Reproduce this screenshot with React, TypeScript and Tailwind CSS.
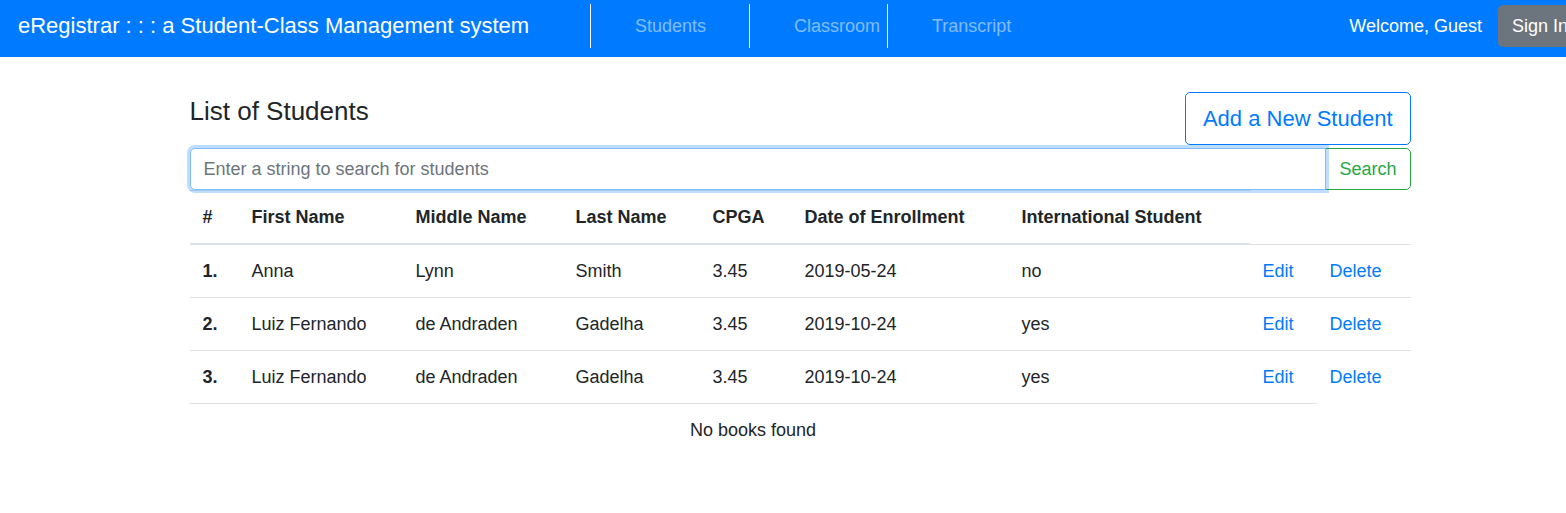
type Student = {
  first: string;
  middle: string;
  last: string;
  cgpa: string;
  enrolled: string;
  international: string;
};

const students: Student[] = [
  { first: 'Anna', middle: 'Lynn', last: 'Smith', cgpa: '3.45', enrolled: '2019-05-24', international: 'no' },
  { first: 'Luiz Fernando', middle: 'de Andraden', last: 'Gadelha', cgpa: '3.45', enrolled: '2019-10-24', international: 'yes' },
  { first: 'Luiz Fernando', middle: 'de Andraden', last: 'Gadelha', cgpa: '3.45', enrolled: '2019-10-24', international: 'yes' },
];

const headings = ['#', 'First Name', 'Middle Name', 'Last Name', 'CPGA', 'Date of Enrollment', 'International Student'];

const cell = 'border-t border-[#dee2e6] p-[13px] text-left align-top';

function NavBar() {
  return (
    <header className="flex h-[57px] items-center bg-[#007bff] px-[18px] pb-[5px] text-white">
      <a href="#home" className="w-[572px] shrink-0 text-[22px] leading-8 whitespace-nowrap">
        eRegistrar : : : a Student-Class Management system
      </a>
      <nav className="flex h-11 items-center text-white/50">
        <a href="#students" className="flex h-11 w-[159px] items-center border-l border-white pl-11">Students</a>
        <a href="#classroom" className="flex h-11 w-[138px] items-center border-l border-white pl-11">Classroom</a>
        <a href="#transcript" className="flex h-11 items-center border-l border-white pl-11">Transcript</a>
      </nav>
      <div className="ml-auto flex items-center gap-4 whitespace-nowrap">
        <span>Welcome, Guest</span>
        <button type="button" className="h-[42px] rounded-[5px] bg-[#6c757d] px-[14px]">Sign In</button>
      </div>
    </header>
  );
}

function SearchForm() {
  return (
    <form className="flex" onSubmit={(e) => e.preventDefault()}>
      <input
        type="text"
        aria-label="Search students"
        placeholder="Enter a string to search for students"
        className="relative z-10 h-[42px] min-w-0 flex-1 rounded-l-[5px] border border-[#80bdff] bg-white px-[13px] shadow-[0_0_0_3px_rgba(0,123,255,0.25)] outline-none placeholder:text-[#6c757d]"
      />
      <button type="submit" className="-ml-px h-[42px] rounded-r-[5px] border border-[#28a745] px-[13px] text-[#28a745]">
        Search
      </button>
    </form>
  );
}

function StudentTable() {
  return (
    <table className="w-full table-fixed border-collapse">
      <colgroup>
        <col className="w-[49px]" />
        <col className="w-[164px]" />
        <col className="w-[160px]" />
        <col className="w-[137px]" />
        <col className="w-[92px]" />
        <col className="w-[217px]" />
        <col className="w-[241px]" />
        <col className="w-[67px]" />
        <col className="w-[94px]" />
      </colgroup>
      <thead>
        <tr>
          {headings.map((h) => (
            <th key={h} scope="col" className="border-t border-b-2 border-[#dee2e6] p-[13px] text-left font-bold">
              {h}
            </th>
          ))}
        </tr>
      </thead>
      <tbody>
        {students.map((s, i) => (
          <tr key={i}>
            <th scope="row" className={cell}>{i + 1}.</th>
            <td className={cell}>{s.first}</td>
            <td className={cell}>{s.middle}</td>
            <td className={cell}>{s.last}</td>
            <td className={cell}>{s.cgpa}</td>
            <td className={cell}>{s.enrolled}</td>
            <td className={cell}>{s.international}</td>
            <td className={cell}><a href="#edit" className="text-[#007bff]">Edit</a></td>
            <td className={cell}><a href="#delete" className="text-[#007bff]">Delete</a></td>
          </tr>
        ))}
        <tr>
          <td colSpan={8} className="border-t border-[#dee2e6] p-[13px] text-center">No books found</td>
        </tr>
      </tbody>
    </table>
  );
}

export default function App() {
  return (
    <div className="overflow-x-hidden bg-white font-['Liberation_Sans',Arial,sans-serif] text-[18px] leading-[26px] text-[#212529]">
      <div className="-mr-[34px]">
        <NavBar />
        <main className="mx-auto max-w-[1221px] pt-[35px]">
          <div className="mb-[3px] flex items-start justify-between">
            <h1 className="pt-[3px] text-[26px] leading-8">List of Students</h1>
            <button type="button" className="h-[53px] rounded-[5px] border border-[#007bff] px-[17px] text-[22px] text-[#007bff]">
              Add a New Student
            </button>
          </div>
          <SearchForm />
          <StudentTable />
        </main>
      </div>
    </div>
  );
}
